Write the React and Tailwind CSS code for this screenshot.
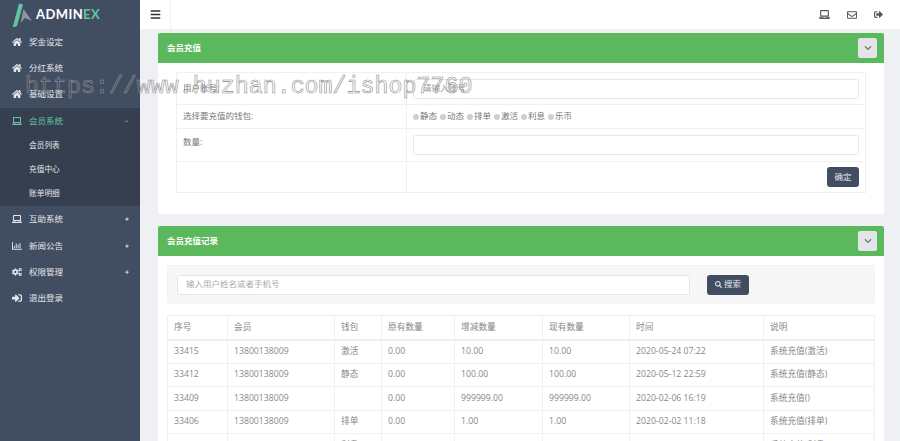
import React from "react";
import { FaHome, FaLaptop, FaRegChartBar, FaCogs, FaSignInAlt, FaRegEnvelope, FaSignOutAlt, FaBars, FaChevronDown, FaSearch, FaPlus, FaMinus } from "react-icons/fa";

const font = { fontFamily: '"Open Sans", "Noto Sans CJK SC", sans-serif' };

function MenuItem({ icon: Icon, label, mark, active }) {
  return (
    <div className={`h-[26px] flex items-center pl-[12px] pr-[11px] text-[8.5px] ${active ? "text-[#65c3a0]" : "text-[#e4e6ea]"}`}>
      <Icon className="w-[10px] h-[10px] shrink-0" />
      <span className="ml-[7px] flex-1">{label}</span>
      {mark === "plus" && <FaPlus className="w-[4px] h-[4px] text-white" />}
      {mark === "minus" && <FaMinus className="w-[5px] h-[4px]" />}
    </div>
  );
}

function Sidebar() {
  return (
    <aside className="w-[140px] shrink-0 h-full bg-[#414e62]">
      <div className="h-[29px] flex items-center pl-[11px]">
        <svg width="22" height="24" viewBox="0 0 22 24" className="shrink-0">
          <path d="M8 0.5 L12 1.5 L6 23 L1.5 25 Z" fill="#65c3a0" />
          <path d="M12.5 6 L21 18 L14 15 L9.5 20 Z" fill="#8a96a8" />
        </svg>
        <span className="ml-[3px] text-[13px] font-bold tracking-[0.4px] text-white" style={{ fontFamily: "Lato, sans-serif" }}>
          ADMIN<span className="text-[#65c3a0]">EX</span>
        </span>
      </div>
      <MenuItem icon={FaHome} label="奖金设定" />
      <MenuItem icon={FaHome} label="分红系统" />
      <MenuItem icon={FaHome} label="基础设置" />
      <div className="mt-[1px] h-[98px] bg-[#353f4f]">
        <MenuItem icon={FaLaptop} label="会员系统" mark="minus" active />
        {["会员列表", "充值中心", "账单明细"].map((t) => (
          <div key={t} className="h-[24px] flex items-center pl-[29px] text-[7.7px] text-[#e4e6ea]">{t}</div>
        ))}
      </div>
      <MenuItem icon={FaLaptop} label="互助系统" mark="plus" />
      <div className="h-[1px]" />
      <MenuItem icon={FaRegChartBar} label="新闻公告" mark="plus" />
      <MenuItem icon={FaCogs} label="权限管理" mark="plus" />
      <MenuItem icon={FaSignInAlt} label="退出登录" />
    </aside>
  );
}

function Topbar() {
  return (
    <header className="h-[29px] bg-white flex items-center shrink-0">
      <div className="w-[31px] h-full flex items-center justify-center border-r border-[#eff0f4] text-[#333]">
        <FaBars className="w-[11px] h-[11px]" />
      </div>
      <div className="flex-1" />
      <div className="flex items-center gap-[17px] pr-[17px] text-[#555]">
        <FaLaptop className="w-[11px] h-[11px]" />
        <FaRegEnvelope className="w-[10px] h-[10px]" />
        <FaSignOutAlt className="w-[9px] h-[9px]" />
      </div>
    </header>
  );
}

function PanelHead({ title }) {
  return (
    <div className="h-[30px] bg-[#5cb85c] rounded-t-[2px] flex items-center pl-[9px] pr-[7px]">
      <span className="text-[8.5px] font-bold text-white flex-1">{title}</span>
      <span className="w-[19px] h-[20px] rounded-[2px] bg-[#e4e5ea] flex items-center justify-center text-[#777]">
        <FaChevronDown className="w-[8px] h-[8px]" />
      </span>
    </div>
  );
}

const Field = () => <div className="h-[20px] rounded-[3px] border border-[#e6e6e6] bg-white" />;

function Radio({ label }) {
  return (
    <span className="inline-flex items-center mr-[3px]">
      <span className="w-[6px] h-[6px] rounded-full bg-[#cfcfcf] mr-[1px]" />
      {label}
    </span>
  );
}

function RechargeForm() {
  const td = "border border-[#f0f0f0] align-middle";
  return (
    <table className="w-full table-fixed border-collapse text-[8.5px] text-[#777]">
      <colgroup>
        <col className="w-[230px]" />
        <col />
      </colgroup>
      <tbody>
        <tr className="h-[32px]">
          <td className={`${td} pl-[6px]`}>用户账号:</td>
          <td className={`${td} px-[6px]`}>
            <div className="h-[20px] rounded-[3px] border border-[#e6e6e6] bg-white flex items-center pl-[9px] text-[#999]">请输入账号</div>
          </td>
        </tr>
        <tr className="h-[24px]">
          <td className={`${td} pl-[6px]`}>选择要充值的钱包:</td>
          <td className={`${td} pl-[6px]`}>
            <div className="flex items-center">
              {["静态", "动态", "排单", "激活", "利息", "乐币"].map((r) => <Radio key={r} label={r} />)}
            </div>
          </td>
        </tr>
        <tr className="h-[33px]">
          <td className={`${td} pl-[6px] align-top pt-[7px]`}>数量:</td>
          <td className={`${td} px-[6px]`}><Field /></td>
        </tr>
        <tr className="h-[31px]">
          <td className={td} />
          <td className={`${td} px-[6px]`}>
            <div className="flex justify-end">
              <span className="h-[20px] w-[32px] rounded-[3px] bg-[#414e62] text-[#e4e6ea] flex items-center justify-center">确定</span>
            </div>
          </td>
        </tr>
      </tbody>
    </table>
  );
}

const columns = [
  ["序号", "w-[60px]"],
  ["会员", "w-[107px]"],
  ["钱包", "w-[47px]"],
  ["原有数量", "w-[73px]"],
  ["增减数量", "w-[88px]"],
  ["现有数量", "w-[87px]"],
  ["时间", "w-[134px]"],
  ["说明", ""],
];

const rows = [
  ["33415", "13800138009", "激活", "0.00", "10.00", "10.00", "2020-05-24 07:22", "系统充值(激活)"],
  ["33412", "13800138009", "静态", "0.00", "100.00", "100.00", "2020-05-12 22:59", "系统充值(静态)"],
  ["33409", "13800138009", "", "0.00", "999999.00", "999999.00", "2020-02-06 16:19", "系统充值()"],
  ["33406", "13800138009", "排单", "0.00", "1.00", "1.00", "2020-02-02 11:18", "系统充值(排单)"],
  ["33404", "13800138009", "利息", "0.00", "10.00", "10.00", "2020-02-02 11:15", "系统充值(利息)"],
];

function RecordTable() {
  return (
    <table className="w-[708px] table-fixed border-collapse text-[8.7px] text-[#888]">
      <thead>
        <tr className="h-[24px] border-b-2 border-[#eeeeee]">
          {columns.map(([c, w]) => (
            <th key={c} className={`${w} border border-[#f0f0f0] border-b-2 border-b-[#eeeeee] pl-[6px] text-left font-normal`}>{c}</th>
          ))}
        </tr>
      </thead>
      <tbody>
        {rows.map((r) => (
          <tr key={r[0]} className="h-[23.5px]">
            {r.map((c, i) => (
              <td key={i} className="border border-[#f0f0f0] pl-[6px]">{c}</td>
            ))}
          </tr>
        ))}
      </tbody>
    </table>
  );
}

export default function App() {
  return (
    <div className="relative h-screen w-full flex overflow-hidden bg-[#eff0f4]" style={font}>
      <Sidebar />
      <main className="flex-1 min-w-0 flex flex-col">
        <Topbar />
        <div className="pt-[4px] pl-[18px] pr-[16px] flex flex-col gap-[12px]">
          <section className="bg-white rounded-[2px]">
            <PanelHead title="会员充值" />
            <div className="pt-[9px] pb-[21px] pl-[18px] pr-[18px]">
              <RechargeForm />
            </div>
          </section>
          <section className="bg-white rounded-[2px]">
            <PanelHead title="会员充值记录" />
            <div className="px-[9px] pt-[9px]">
              <div className="h-[39px] bg-[#f7f7f7] rounded-[2px] flex items-center pl-[9px] border border-[#f3f3f3]">
                <div className="w-[513px] h-[20px] bg-white rounded-[2px] border border-[#e6e6e6] flex items-center pl-[8px] text-[8.5px] text-[#aaa]">输入用户姓名或者手机号</div>
                <span className="ml-[17px] w-[42px] h-[20px] rounded-[3px] bg-[#414e62] text-[#e4e6ea] text-[8.5px] flex items-center justify-center">
                  <FaSearch className="w-[7px] h-[7px] mr-[2px]" />搜索
                </span>
              </div>
              <div className="mt-[11px]">
                <RecordTable />
              </div>
            </div>
          </section>
        </div>
      </main>
      <div
        className="absolute left-[25px] top-[70px] text-[23.3px] leading-[34px] whitespace-nowrap text-transparent pointer-events-none"
        style={{ fontFamily: '"Liberation Mono", monospace', WebkitTextStroke: "0.6px #8f8f8f" }}
      >
        https://www.huzhan.com/ishop7760
      </div>
    </div>
  );
}
